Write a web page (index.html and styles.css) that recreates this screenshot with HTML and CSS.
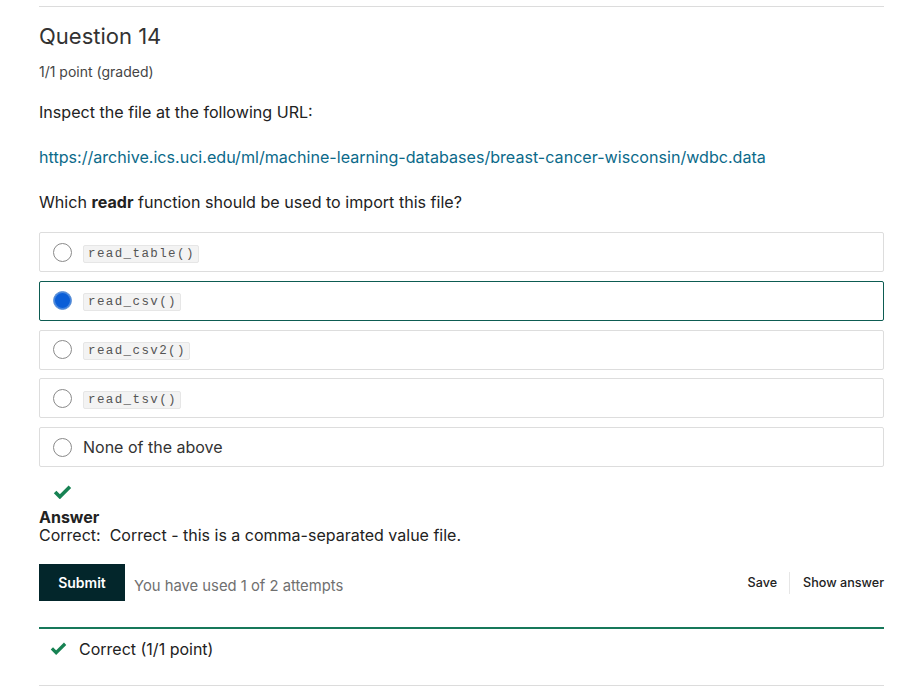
FILE: index.html
```html
<!DOCTYPE html>
<html>
<head>
<meta charset="utf-8">
<link rel="stylesheet" href="styles.css">
</head>
<body>
<div class="problem">
  <h3 class="title">Question 14</h3>
  <div class="points">1/1 point (graded)</div>
  <p class="para">Inspect the file at the following URL:</p>
  <p class="para"><a class="link" href="#">https://archive.ics.uci.edu/ml/machine-learning-databases/breast-cancer-wisconsin/wdbc.data</a></p>
  <p class="para">Which <b>readr</b> function should be used to import this file?</p>
  <div class="options">
    <label class="opt"><span class="radio"></span><code class="code">read_table()</code></label>
    <label class="opt selected"><span class="radio on"></span><code class="code">read_csv()</code></label>
    <label class="opt"><span class="radio"></span><code class="code">read_csv2()</code></label>
    <label class="opt"><span class="radio"></span><code class="code">read_tsv()</code></label>
    <label class="opt"><span class="radio"></span><span class="plain">None of the above</span></label>
  </div>
  <div class="status">
    <svg width="19" height="15" viewBox="0 0 18 14"><path d="M2 7.5l4.5 4.5L16 2.5" fill="none" stroke="#178253" stroke-width="3.4"/></svg>
  </div>
  <div class="answer">
    <div class="ans-title">Answer</div>
    <div class="ans-text">Correct:&nbsp; Correct - this is a comma-separated value file.</div>
  </div>
  <div class="actions">
    <button class="submit">Submit</button>
    <span class="attempts">You have used 1 of 2 attempts</span>
    <div class="right">
      <span class="act">Save</span>
      <span class="sep"></span>
      <span class="act">Show answer</span>
    </div>
  </div>
  <div class="notice">
    <svg width="17" height="14" viewBox="0 0 18 14"><path d="M2 7.5l4.5 4.5L16 2.5" fill="none" stroke="#178253" stroke-width="3.4"/></svg>
    <span>Correct (1/1 point)</span>
  </div>
</div>
</body>
</html>
```
FILE: styles.css
```css
body {
  margin: 0;
  background: #fff;
  font-family: Inter, "Liberation Sans", sans-serif;
  color: #222;
}
.problem {
  margin: 6px 29px 0 39px;
  border-top: 1px solid #dcdcdc;
  border-bottom: 1px solid #dcdcdc;
}
.title {
  margin: 16px 0 0;
  font-size: 22px;
  font-weight: 400;
  color: #333;
  line-height: 26px;
}
.points {
  margin-top: 15px;
  font-size: 14px;
  color: #454545;
  line-height: 16px;
}
.para {
  margin: 0;
  font-size: 16.1px;
  line-height: 20px;
  color: #222;
}
.points + .para { margin-top: 22px; }
.para + .para { margin-top: 25px; }
.link { color: #0b6a8a; text-decoration: none; }
.options {
  margin-top: 20px;
  display: flex;
  flex-direction: column;
  gap: 8.75px;
}
.opt {
  display: flex;
  align-items: center;
  height: 38px;
  border: 1px solid #dddddd;
  border-radius: 2px;
  padding-left: 13px;
}
.opt.selected { border-color: #0d5c52; }
.radio {
  width: 19px;
  height: 19px;
  border: 1px solid #8a8a8a;
  border-radius: 50%;
  box-sizing: border-box;
  margin-right: 11px;
  flex: none;
}
.radio.on {
  border: 1px solid #6d9bd8;
  background: #0b5ed7;
  box-shadow: inset 0 0 0 1px #4d8be0;
}
.code {
  font-family: "Liberation Mono", monospace;
  font-size: 12.5px;
  letter-spacing: 1.4px;
  color: #555;
  background: #f3f3f3;
  border: 1px solid #e6e6e6;
  padding: 1px 3px 1px 4px;
  border-radius: 2px;
  margin-top: 3px;
}
.plain { font-size: 16px; color: #333; }
.status { margin: 16px 0 0 14px; height: 16px; }
.answer { margin-top: 9px; font-size: 16px; line-height: 18px; color: #222; }
.ans-title { font-weight: 700; }
.actions {
  margin-top: 20px;
  display: flex;
  align-items: center;
}
.submit {
  background: #03262b;
  color: #fff;
  border: none;
  font-family: Inter, "Liberation Sans", sans-serif;
  font-size: 14px;
  font-weight: 600;
  width: 86px;
  height: 37px;
  border-radius: 0;
  padding: 0;
}
.attempts { margin-left: 9px; margin-top: 7px; font-size: 14.8px; color: #707070; }
.right { margin-left: auto; display: flex; align-items: center; }
.act { font-size: 12.6px; font-weight: 500; color: #222; }
.sep { width: 1px; height: 22px; background: #e6e6e6; margin: 0 13px 0 12px; }
.notice {
  margin-top: 26px;
  border-top: 2px solid #17785a;
  height: 58px;
  display: flex;
  padding-left: 11px;
  box-sizing: border-box;
  font-size: 16px;
  color: #222;
  align-items: flex-start;
  padding-top: 10px;
}
.notice svg { margin-top: 2px; margin-right: 12px; }
```
